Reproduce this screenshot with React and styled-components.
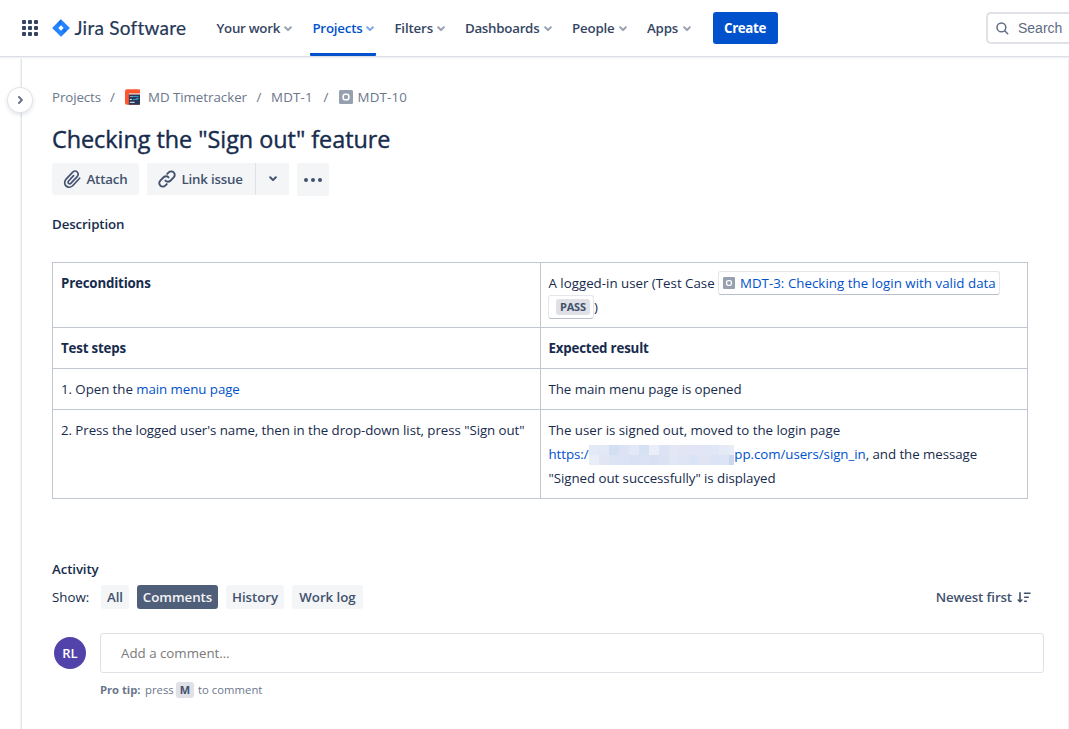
import React from "react";
import styled, { createGlobalStyle, css } from "styled-components";

const Global = createGlobalStyle`
  * { box-sizing: border-box; }
  html, body { margin: 0; height: 100%; overflow: hidden; background: #fff; }
  body {
    font-family: "Open Sans", "Noto Sans", sans-serif;
    font-size: 13.3px;
    letter-spacing: -0.05px;
    color: #172b4d;
  }
  button, input { font: inherit; letter-spacing: inherit; border: 0; padding: 0; margin: 0; }
`;

const Page = styled.div`
  width: 1069px;
  height: 729px;
  display: flex;
  flex-direction: column;
  overflow: hidden;
`;

const Header = styled.header`
  height: 56px;
  flex: none;
  display: flex;
  align-items: center;
  padding-left: 22px;
  background: #fff;
  position: relative;
  z-index: 2;
  box-shadow: 0 1px 0 #dddfe6, 0 2px 0 #f0f1f5, 0 3px 0 #fafafc;
`;

const Logo = styled.div`
  display: flex;
  align-items: center;
  gap: 5px;
  margin-left: 13.5px;
  width: 162.5px;
`;

const LogoText = styled.span`
  font-family: Lato, sans-serif;
  font-size: 19px;
  line-height: 24px;
  letter-spacing: 0.25px;
  padding-bottom: 1px;
  -webkit-text-stroke: 0.2px #253858;
  color: #253858;
  white-space: nowrap;
`;

const Nav = styled.nav`
  display: flex;
  gap: 16px;
  height: 56px;
`;

const NavItem = styled.a`
  width: ${(p) => p.$w}px;
  height: 56px;
  padding: 0 2px;
  display: flex;
  align-items: center;
  justify-content: space-between;
  font-weight: 600;
  letter-spacing: ${(p) => p.$ls}px;
  white-space: nowrap;
  color: ${(p) => (p.$active ? "#0052cc" : "#344563")};
  border-bottom: 3px solid ${(p) => (p.$active ? "#0052cc" : "transparent")};
  border-top: 3px solid transparent;
  border-radius: 1px;
  svg { opacity: 0.5; margin-top: 1px; }
`;

const NavLabel = styled.span`
  padding: 0 0 1px 0.4px;
`;

const CreateButton = styled.button`
  width: 65px;
  height: 32px;
  margin-left: 20px;
  border-radius: 3px;
  background: #0052cc;
  color: #fff;
  font-weight: 700;
  letter-spacing: -0.35px;
`;

const SearchBox = styled.div`
  margin-left: auto;
  flex: none;
  width: 83px;
  height: 32px;
  border: 2px solid #dfe1e6;
  border-right: 0;
  border-radius: 5px 0 0 5px;
  display: flex;
  align-items: center;
  gap: 9px;
  padding-left: 8px;
  color: #5e6c84;
  font-family: "Liberation Sans", Arial, sans-serif;
  font-size: 14px;
  letter-spacing: 0;
`;

const Body = styled.div`
  flex: 1;
  display: flex;
  border-right: 1px solid #eeeff2;
`;

const Rail = styled.aside`
  width: 22px;
  flex: none;
  border-right: 1px solid #e3e4e9;
  box-shadow: inset -1px 0 0 #f3f4f6;
  position: relative;
`;

const RailToggle = styled.button`
  position: absolute;
  left: 8px;
  top: 32px;
  width: 24px;
  height: 24px;
  border-radius: 50%;
  background: #fff;
  color: #6b778c;
  box-shadow: 0 0 0 1px #e3e5ea, 0 2px 4px 1px rgba(9, 30, 66, 0.12);
  display: flex;
  align-items: center;
  justify-content: center;
`;

const Main = styled.main`
  flex: 1;
  padding: 31px 24px 0 30px;
`;

const Crumbs = styled.div`
  height: 20px;
  display: flex;
  align-items: center;
  color: #6b778c;
  white-space: nowrap;
`;

const Crumb = styled.span`
  width: ${(p) => p.$w}px;
  display: flex;
  align-items: center;
  gap: ${(p) => p.$gap || 0}px;
  letter-spacing: ${(p) => p.$ls}px;
`;

const Slash = styled.span`
  width: ${(p) => p.$w || 24}px;
  text-align: center;
`;

const Title = styled.h1`
  margin: 18px 0 0;
  height: 28px;
  font-size: 23.4px;
  line-height: 28px;
  font-weight: 400;
  letter-spacing: -0.03px;
  -webkit-text-stroke: 0.4px #172b4d;
  white-space: nowrap;
`;

const Toolbar = styled.div`
  display: flex;
  gap: 8px;
  margin-top: 10px;
  height: 33px;
`;

const ToolButton = styled.button`
  width: ${(p) => p.$w}px;
  height: ${(p) => p.$h || 32}px;
  display: flex;
  align-items: center;
  justify-content: ${(p) => (p.$center ? "center" : "flex-start")};
  gap: ${(p) => p.$gap || 5}px;
  padding-left: ${(p) => (p.$center ? 0 : 10.5)}px;
  background: #f4f5f7;
  color: #42526e;
  font-weight: 600;
  white-space: nowrap;
  border-radius: ${(p) => p.$radius || "3px"};
`;

const ToolLabel = styled.span`
  padding-bottom: 1px;
  letter-spacing: ${(p) => p.$ls}px;
`;

const Split = styled.div`
  display: flex;
  gap: 1px;
  height: 32px;
  border-radius: 3px;
  background: #dfe1e6;
`;

const Heading = styled.h2`
  margin: ${(p) => p.$top}px 0 0;
  height: 20px;
  font-size: 13.3px;
  line-height: 20px;
  font-weight: 600;
  letter-spacing: -0.12px;
`;

const Table = styled.table`
  width: 976px;
  margin-top: 28px;
  border-collapse: collapse;
  table-layout: fixed;
`;

const Cell = styled.td`
  border: 1px solid #c1c7d0;
  padding: 8px;
  vertical-align: top;
  line-height: 24px;
  white-space: nowrap;
  font-weight: ${(p) => (p.$bold ? 700 : 400)};
  letter-spacing: ${(p) => (p.$bold ? -0.18 : -0.06)}px;
`;

const Line = styled.div`
  display: flex;
  align-items: center;
  height: 24px;
  white-space: nowrap;
  letter-spacing: ${(p) => p.$ls || -0.05}px;
`;

const Link = styled.a`
  color: #0052cc;
`;

const LeadIn = styled.span`
  width: 170px;
  letter-spacing: 0;
`;

const SmartLink = styled.a`
  display: flex;
  align-items: center;
  height: 24px;
  width: ${(p) => p.$w}px;
  margin-left: -0.6px;
  padding-left: ${(p) => p.$pl}px;
  gap: 5px;
  border: 1px solid #e4e6ea;
  border-bottom-color: #b9bfca;
  border-radius: 3px;
  color: #0052cc;
  letter-spacing: 0.03px;
`;

const Lozenge = styled.span`
  width: 34px;
  height: 16px;
  border-radius: 3px;
  background: #dfe1e6;
  color: #42526e;
  font-size: 11px;
  line-height: 16px;
  font-weight: 700;
  text-align: center;
  letter-spacing: -0.2px;
`;

const UrlHead = styled.a`
  color: #0052cc;
  width: 40px;
`;

const UrlTail = styled.a`
  color: #0052cc;
  margin-left: -6.5px;
`;

const Mosaic = styled.span`
  position: relative;
  z-index: 1;
  display: grid;
  flex: none;
  width: 145px;
  height: 20px;
  margin-top: 2px;
  grid-template-columns: repeat(14, 10px) 5px;
  grid-auto-rows: 10px;
  background: #e3e8f5;
`;

const Tile = styled.i`
  background: ${(p) => p.$c};
`;

const FilterRow = styled.div`
  display: flex;
  align-items: center;
  height: 24px;
  margin-top: 6px;
  gap: 8px;
`;

const ShowLabel = styled.span`
  width: 41px;
  white-space: nowrap;
  padding-bottom: 1px;
  letter-spacing: 0;
`;

const FilterButton = styled.button`
  width: ${(p) => p.$w}px;
  height: 24px;
  padding-bottom: 1px;
  border-radius: 3px;
  background: #f4f5f7;
  color: #42526e;
  font-weight: 600;
  white-space: nowrap;
  ${(p) =>
    p.$on &&
    css`
      background: #505f79;
      color: #f4f5f7;
    `}
`;

const SortButton = styled.button`
  margin-left: auto;
  margin-right: 13px;
  background: none;
  color: #42526e;
  font-weight: 600;
  letter-spacing: -0.12px;
  display: flex;
  align-items: center;
  gap: 5px;
  white-space: nowrap;
`;

const CommentRow = styled.div`
  display: flex;
  align-items: center;
  margin-top: 24px;
  padding-left: 2px;
  gap: 14px;
`;

const Avatar = styled.div`
  width: 32px;
  height: 32px;
  border-radius: 50%;
  background: #5243aa;
  color: #fff;
  font-size: 13px;
  font-weight: 600;
  display: flex;
  align-items: center;
  justify-content: center;
`;

const CommentBox = styled.div`
  width: 944px;
  height: 40px;
  border: 1px solid #dfe1e6;
  border-radius: 3px;
  padding: 0 0 1px 20px;
  display: flex;
  align-items: center;
  color: #7a7a7a;
  letter-spacing: 0;
`;

const Tip = styled.div`
  display: flex;
  align-items: center;
  margin: 9px 0 0 48px;
  height: 16px;
  font-size: 11.3px;
  line-height: 16px;
  color: #6b778c;
  letter-spacing: 0.02px;
  white-space: nowrap;
`;

const TipLabel = styled.b`
  width: 45px;
  font-weight: 700;
  letter-spacing: -0.05px;
`;

const TipWord = styled.span`
  width: 31px;
`;

const Key = styled.kbd`
  width: 18px;
  height: 16px;
  margin-right: 4px;
  border-radius: 3px;
  background: #dfe1e6;
  color: #42526e;
  font: 700 11px/16px "Open Sans", sans-serif;
  text-align: center;
`;

const Grid = () => (
  <svg width="16" height="16" fill="#344563">
    {[0, 6, 12].map((y) => [0, 6, 12].map((x) => <rect key={x + "-" + y} x={x} y={y} width="4" height="4" rx="1" />))}
  </svg>
);

const JiraMark = () => (
  <svg width="18" height="18" viewBox="0 0 18 18">
    <defs>
      <linearGradient id="ja" x1="0.9" y1="0" x2="0.3" y2="0.7">
        <stop offset="0.1" stopColor="#0052cc" />
        <stop offset="1" stopColor="#2684ff" />
      </linearGradient>
    </defs>
    <path d="M9 .2 17.4 8.6a.6.6 0 0 1 0 .8L9 17.8.6 9.4a.6.6 0 0 1 0-.8z" fill="#2684ff" />
    <path d="M9 .2v5.9L6.1 9 3.4 6.1z" fill="url(#ja)" opacity=".6" />
    <path d="M9 17.8v-5.9L11.9 9l2.7 2.9z" fill="url(#ja)" opacity=".6" />
    <path d="M9 6.3 11.7 9 9 11.7 6.3 9z" fill="#fff" />
  </svg>
);

const Chevron = () => (
  <svg width="8" height="6" viewBox="0 0 8 6" fill="none" stroke="currentColor" strokeWidth="2" strokeLinecap="round" strokeLinejoin="round">
    <path d="M1.2 1.3 4 4.1l2.8-2.8" />
  </svg>
);

const ChevronRight = () => (
  <svg width="6" height="8" viewBox="0 0 6 8" fill="none" stroke="currentColor" strokeWidth="2" strokeLinecap="round" strokeLinejoin="round">
    <path d="M2 1 4.9 4 2 7" />
  </svg>
);

const SearchIcon = () => (
  <svg width="13" height="13" viewBox="0 0 13 13" fill="none" stroke="#5e6c84" strokeWidth="1.5" strokeLinecap="round">
    <circle cx="5.4" cy="5.4" r="4.4" />
    <path d="m8.7 8.7 3 3" />
  </svg>
);

const ProjectIcon = () => (
  <svg width="16" height="16" viewBox="0 0 16 16">
    <rect width="16" height="16" rx="2" fill="#ff5630" />
    <path d="M4 4h12v10a2 2 0 0 1-2 2H4z" fill="#253858" />
    <path d="M4 4h12v1.5H4z" fill="#ffc9bc" />
    <path d="M5 7.5h4M12 9.5h2" stroke="#8fa3bd" />
    <path d="M9 7.5h5M8 10.5h5" stroke="#2aa5c9" />
    <path d="M5 10.5h2M5 13.5h5" stroke="#fff" />
  </svg>
);

const IssueIcon = ({ size = 14 }) => (
  <svg width={size} height={size} viewBox="0 0 14 14">
    <rect width="14" height="14" rx="1.5" fill="#97a0af" />
    <rect x="4.2" y="4.2" width="5.6" height="5.6" rx="2" fill="none" stroke="#fff" strokeWidth="1.6" />
  </svg>
);

const Clip = () => (
  <svg width="18" height="18" viewBox="0 0 18 18" fill="none" stroke="currentColor" strokeWidth="1.7" strokeLinecap="round" strokeLinejoin="round">
    <path d="m16.6 8.2-6.7 7.3c-1.900 2-4.900 2.200-6.800.5s-1.900-4.800 0-6.800l6.400-6.900c1.300-1.400 3.400-1.500 4.700-.3s1.300 3.200 0 4.600l-6.200 6.600c-.7.800-1.700.800-2.400.200s-.700-1.600 0-2.400l5-5.400" />
  </svg>
);

const Chain = () => (
  <svg width="18" height="18" viewBox="0 0 18 18" fill="none" stroke="currentColor" strokeWidth="1.9" strokeLinecap="round" strokeLinejoin="round">
    <path d="M7.4 10.6a3.5 3.5 0 0 0 5 .1l3.3-3.3a3.5 3.5 0 0 0-5-5L9.2 3.900" />
    <path d="M10.6 7.4a3.5 3.5 0 0 0-5-.1l-3.3 3.3a3.5 3.5 0 0 0 5 5l1.5-1.5" />
  </svg>
);

const Dots = () => (
  <svg width="18" height="4" fill="currentColor">
    <circle cx="2" cy="2" r="2" />
    <circle cx="9" cy="2" r="2" />
    <circle cx="16" cy="2" r="2" />
  </svg>
);

const SortIcon = () => (
  <svg width="14" height="11" viewBox="0 0 14 11" fill="none" stroke="currentColor" strokeWidth="1.6" strokeLinecap="round" strokeLinejoin="round">
    <path d="M3 .8v8.6M1.2 8 3 9.700 4.800 8M7.500 1.300H13M7.700 5.300h3.600M7.700 9.300h1.700" />
  </svg>
);

const NAV = [
  { label: "Your work", w: 80, ls: -0.25 },
  { label: "Projects", w: 66, ls: -0.2, active: true },
  { label: "Filters", w: 54.5, ls: -0.15 },
  { label: "Dashboards", w: 91, ls: -0.25 },
  { label: "People", w: 59, ls: -0.15 },
  { label: "Apps", w: 48, ls: -0.15 },
];

const TILES = [
  "#e2eaf7", "#e3e8f6", "#d3dff3", "#dbe3f5", "#e3e8f6", "#d6e1f4", "#e9eef8", "#dce3f5", "#e3e8f6", "#e2e5f3", "#e2e5f3", "#e0e5f5", "#e0e6f5", "#e5eaf7", "#e9edf7",
  "#e7eef8", "#e2e5f4", "#dce4f4", "#dbe3f4", "#d8e2f3", "#d9e3f5", "#d9e0f2", "#dae2f3", "#e0e8f6", "#dfe5f5", "#d9e4f6", "#e1e5f3", "#dbe3f4", "#dce4f5", "#ccd8f0",
];

const FILTERS = [
  { label: "All", w: 28 },
  { label: "Comments", w: 81, on: true },
  { label: "History", w: 58 },
  { label: "Work log", w: 71 },
];

export default function App() {
  return (
    <Page>
      <Global />
      <Header>
        <Grid />
        <Logo>
          <JiraMark />
          <LogoText>Jira Software</LogoText>
        </Logo>
        <Nav>
          {NAV.map((n) => (
            <NavItem key={n.label} $w={n.w} $ls={n.ls} $active={n.active}>
              <NavLabel>{n.label}</NavLabel>
              <Chevron />
            </NavItem>
          ))}
        </Nav>
        <CreateButton>Create</CreateButton>
        <SearchBox>
          <SearchIcon />
          Search
        </SearchBox>
      </Header>
      <Body>
        <Rail>
          <RailToggle>
            <ChevronRight />
          </RailToggle>
        </Rail>
        <Main>
          <Crumbs>
            <Crumb $w={48.5} $ls={-0.1}>Projects</Crumb>
            <Slash>/</Slash>
            <Crumb $w={122.5} $gap={8} $ls={-0.02}>
              <ProjectIcon />
              MD Timetracker
            </Crumb>
            <Slash>/</Slash>
            <Crumb $w={42.5} $ls={0.2}>MDT-1</Crumb>
            <Slash $w={25}>/</Slash>
            <Crumb $w={70} $gap={5} $ls={0.2}>
              <IssueIcon />
              MDT-10
            </Crumb>
          </Crumbs>
          <Title>Checking the "Sign out" feature</Title>
          <Toolbar>
            <ToolButton $w={87} $gap={6}>
              <Clip />
              <ToolLabel $ls={-0.2}>Attach</ToolLabel>
            </ToolButton>
            <Split>
              <ToolButton $w={108} $gap={6} $radius="3px 0 0 3px">
                <Chain />
                <ToolLabel $ls={-0.2}>Link issue</ToolLabel>
              </ToolButton>
              <ToolButton $w={33} $center $radius="0 3px 3px 0">
                <Chevron />
              </ToolButton>
            </Split>
            <ToolButton $w={32} $h={33} $center>
              <Dots />
            </ToolButton>
          </Toolbar>
          <Heading $top={18}>Description</Heading>
          <Table>
            <tbody>
              <tr>
                <Cell $bold>Preconditions</Cell>
                <Cell>
                  <Line>
                    <LeadIn>A logged-in user (Test Case</LeadIn>
                    <SmartLink $w={282} $pl={4}>
                      <IssueIcon size={12} />
                      MDT-3: Checking the login with valid data
                    </SmartLink>
                  </Line>
                  <Line>
                    <SmartLink $w={46} $pl={7}>
                      <Lozenge>PASS</Lozenge>
                    </SmartLink>
                    )
                  </Line>
                </Cell>
              </tr>
              <tr>
                <Cell $bold>Test steps</Cell>
                <Cell $bold>Expected result</Cell>
              </tr>
              <tr>
                <Cell>
                  1. Open the <Link>main menu page</Link>
                </Cell>
                <Cell>The main menu page is opened</Cell>
              </tr>
              <tr>
                <Cell>2. Press the logged user's name, then in the drop-down list, press "Sign out"</Cell>
                <Cell>
                  <Line $ls={-0.01}>The user is signed out, moved to the login page</Line>
                  <Line>
                    <UrlHead>https:/</UrlHead>
                    <Mosaic>
                      {TILES.map((c, i) => (
                        <Tile key={i} $c={c} />
                      ))}
                    </Mosaic>
                    <UrlTail>app.com/users/sign_in</UrlTail>
                    <span>, and the message</span>
                  </Line>
                  <Line>"Signed out successfully" is displayed</Line>
                </Cell>
              </tr>
            </tbody>
          </Table>
          <Heading $top={60}>Activity</Heading>
          <FilterRow>
            <ShowLabel>Show:</ShowLabel>
            {FILTERS.map((f) => (
              <FilterButton key={f.label} $w={f.w} $on={f.on}>
                {f.label}
              </FilterButton>
            ))}
            <SortButton>
              Newest first
              <SortIcon />
            </SortButton>
          </FilterRow>
          <CommentRow>
            <Avatar>RL</Avatar>
            <CommentBox>Add a comment…</CommentBox>
          </CommentRow>
          <Tip>
            <TipLabel>Pro tip:</TipLabel>
            <TipWord>press</TipWord>
            <Key>M</Key>
            to comment
          </Tip>
        </Main>
      </Body>
    </Page>
  );
}
